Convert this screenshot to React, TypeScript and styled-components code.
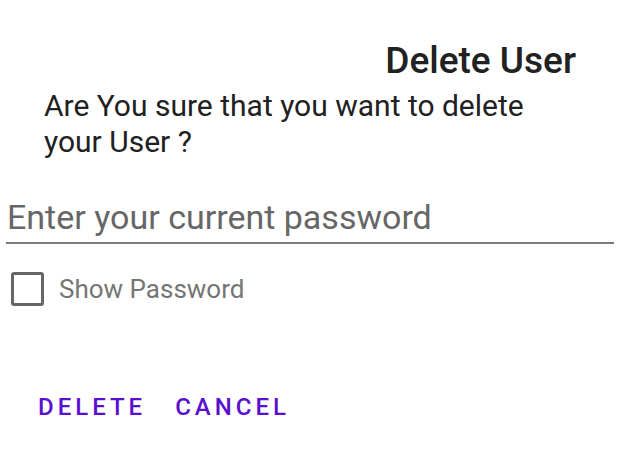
import React from "react";
import styled, { createGlobalStyle } from "styled-components";

const GlobalStyle = createGlobalStyle`
  html, body {
    margin: 0;
    padding: 0;
    background: #ffffff;
  }
  body {
    font-family: Roboto, "Noto Sans", sans-serif;
  }
`;

const Dialog = styled.div`
  width: 620px;
  height: 458px;
  display: flex;
  flex-direction: column;
  background: #ffffff;
  box-sizing: border-box;
  padding-top: 40px;
`;

const Title = styled.h2`
  margin: 0 44px 0 0;
  font-size: 37px;
  line-height: 42px;
  font-weight: 500;
  color: #212121;
  text-align: right;
`;

const Message = styled.p`
  margin: 6px 0 0 44px;
  width: 540px;
  font-size: 30px;
  line-height: 36px;
  font-weight: 400;
  color: #212121;
`;

const PasswordInput = styled.input`
  margin: 37px 6px 0 6px;
  padding: 0 0 5px 1px;
  border: none;
  border-bottom: 2px solid #7a7a7a;
  outline: none;
  font-family: Roboto, "Noto Sans", sans-serif;
  font-size: 34px;
  line-height: 40px;
  height: 47px;
  box-sizing: border-box;
  color: #212121;
  background: transparent;

  &::placeholder {
    color: #666666;
    opacity: 1;
  }
`;

const CheckRow = styled.label`
  display: flex;
  align-items: center;
  gap: 15px;
  margin: 28px 0 0 11px;
`;

const Box = styled.span<{ $checked: boolean }>`
  width: 27px;
  height: 28px;
  border: 3px solid #666666;
  border-radius: 3px;
  background: ${(p) => (p.$checked ? "#666666" : "transparent")};
`;

const CheckLabel = styled.span`
  font-size: 26px;
  line-height: 30px;
  color: #757575;
`;

const Actions = styled.div`
  display: flex;
  gap: 29px;
  margin: 87px 0 0 38px;
`;

const ActionButton = styled.button`
  border: none;
  background: none;
  padding: 0;
  font-family: Roboto, "Noto Sans", sans-serif;
  font-size: 24px;
  line-height: 28px;
  font-weight: 500;
  letter-spacing: 4px;
  color: #5a0fd0;
  cursor: pointer;
`;

export default function App() {
  const [show, setShow] = React.useState(false);
  return (
    <>
      <GlobalStyle />
      <Dialog>
        <Title>Delete User</Title>
        <Message>Are You sure that you want to delete your User ?</Message>
        <PasswordInput
          type={show ? "text" : "password"}
          placeholder="Enter your current password"
        />
        <CheckRow onClick={() => setShow(!show)}>
          <Box $checked={show} />
          <CheckLabel>Show Password</CheckLabel>
        </CheckRow>
        <Actions>
          <ActionButton>DELETE</ActionButton>
          <ActionButton>CANCEL</ActionButton>
        </Actions>
      </Dialog>
    </>
  );
}
